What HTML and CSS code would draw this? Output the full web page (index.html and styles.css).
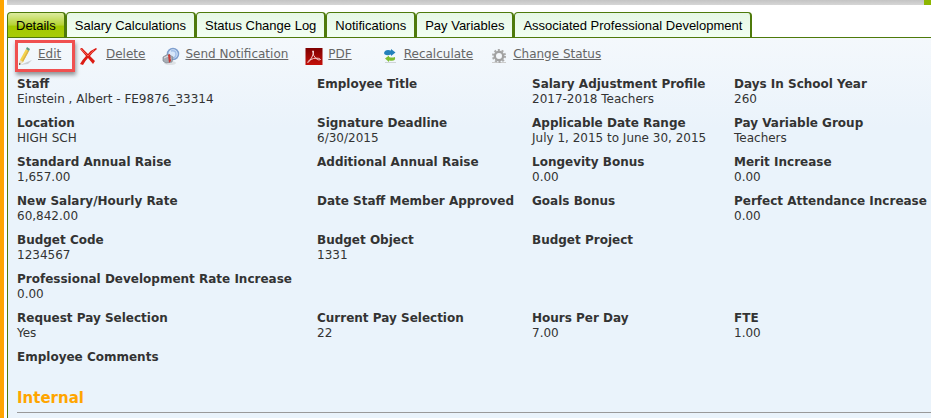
FILE: index.html
```
<!DOCTYPE html>
<html lang="en">
<head>
    <meta charset="UTF-8">
    <meta name="viewport" content="width=device-width, initial-scale=1.0">
    <title>Salary Details</title>
    <link rel="stylesheet" href="styles.css">
</head>
<body>
    <div class="topbar"></div>

    <nav class="tabs">
        <button type="button" class="tab active">Details</button>
        <button type="button" class="tab">Salary Calculations</button>
        <button type="button" class="tab">Status Change Log</button>
        <button type="button" class="tab">Notifications</button>
        <button type="button" class="tab">Pay Variables</button>
        <button type="button" class="tab">Associated Professional Development</button>
    </nav>

    <main class="panel">
        <div class="toolbar">
            <a href="#edit" class="action highlight">
                <svg width="18" height="20" viewBox="0 0 18 20">
                    <path d="M2 19 L14 14 L10 18 Z" fill="#ccd0d3"/>
                    <path d="M2 14 L8 3 L11 5 L5 16 L1 19 Z" fill="#f4d34c"/>
                    <path d="M4 15 L10 4 L11 5 L5 16 Z" fill="#d9b04a"/>
                    <path d="M1 19 L2 14 L5 16 Z" fill="#eadfc8"/>
                    <path d="M1 19 L1 17 L3 18 Z" fill="#444"/>
                    <path d="M8 3 L9 1 L12 3 L11 5 Z" fill="#5f9a82"/>
                </svg>
                <span>Edit</span>
            </a>
            <a href="#delete" class="action delete">
                <svg width="18" height="18" viewBox="0 0 18 18">
                    <path d="M1 2 Q3 0 4 2 L9 7 Q12 3 17 1 L18 2 Q13 6 11 9 L16 14 L14 17 L9 11 Q6 14 4 18 L1 17 Q4 12 7 9 Z" fill="#dc1b13"/>
                    <path d="M2 2 L9 9 L15 3" fill="none" stroke="#f25b4f"/>
                </svg>
                <span>Delete</span>
            </a>
            <a href="#notify" class="action">
                <svg width="18" height="18" viewBox="0 0 18 18">
                    <ellipse cx="8" cy="16" rx="6" ry="2" fill="#dde1e5"/>
                    <circle cx="11" cy="7" r="5.5" fill="#d6e6fa" stroke="#7f9fce" stroke-width="1.5"/>
                    <path d="M9 4 Q14 3 14 7 Q14 11 10 11" fill="none" stroke="#a3c0e8" stroke-width="1.5"/>
                    <path d="M1 10 L6 7 L11 10 L10 15 L4 16 L1 14 Z" fill="#a7adb5" stroke="#7d858f" stroke-width=".7"/>
                    <path d="M2 11 L6 9 L9 12" fill="none" stroke="#e3e6ea"/>
                    <path d="M6 8 L8 7 L9 14 L7 16 Z" fill="#c83a35"/>
                </svg>
                <span>Send Notification</span>
            </a>
            <a href="#pdf" class="action">
                <svg width="17" height="17" viewBox="0 0 17 17">
                    <defs>
                        <linearGradient id="pdf-red" x1="0" y1="0" x2="0" y2="1">
                            <stop offset="0" stop-color="#7e0000"/>
                            <stop offset="1" stop-color="#c4100a"/>
                        </linearGradient>
                    </defs>
                    <rect width="17" height="17" fill="url(#pdf-red)"/>
                    <path d="M7 3 Q8.500 2 8 5 Q7 9 4 13 Q2 15.500 2 14 Q3 12 8 10.500 Q14 9.500 15 11.500 Q14 13 10.500 10.500 Q7.500 8 7 3 Z" fill="none" stroke="#f7dddb" stroke-width=".9"/>
                </svg>
                <span>PDF</span>
            </a>
            <a href="#recalculate" class="action spaced">
                <svg width="14" height="16" viewBox="0 0 14 16">
                    <path d="M2 14 H13 V15 H2 Z" fill="#cfd4d8"/>
                    <path d="M1 5 Q2 1 8 2.500 L8 1 L12.500 4.500 L8 8 L8 6.500 Q5 7.500 3 7 Q1 6.500 1 5 Z" fill="#2380bb"/>
                    <path d="M12 9 Q13 14 6 12.500 L6 14 L2 10.500 L6 7.500 L6 9 Q9 10 12 9 Z" fill="#7fbd31"/>
                </svg>
                <span>Recalculate</span>
            </a>
            <a href="#status" class="action">
                <svg width="16" height="16" viewBox="0 0 16 16">
                    <path d="M1 14 H15 V15 H1 Z" fill="#ccc"/>
                    <circle cx="8" cy="8" r="6" fill="none" stroke="#aaa" stroke-width="2" stroke-dasharray="2 1.770"/>
                    <circle cx="8" cy="8" r="4.200" fill="#f4f7fa" stroke="#a2a2a2" stroke-width="2.400"/>
                </svg>
                <span>Change Status</span>
            </a>
        </div>

        <dl class="details">
            <div><dt>Staff</dt><dd>Einstein , Albert - FE9876_33314</dd></div>
            <div><dt>Employee Title</dt><dd></dd></div>
            <div><dt>Salary Adjustment Profile</dt><dd>2017-2018 Teachers</dd></div>
            <div><dt>Days In School Year</dt><dd>260</dd></div>

            <div><dt>Location</dt><dd>HIGH SCH</dd></div>
            <div><dt>Signature Deadline</dt><dd>6/30/2015</dd></div>
            <div><dt>Applicable Date Range</dt><dd>July 1, 2015 to June 30, 2015</dd></div>
            <div><dt>Pay Variable Group</dt><dd>Teachers</dd></div>

            <div><dt>Standard Annual Raise</dt><dd>1,657.00</dd></div>
            <div><dt>Additional Annual Raise</dt><dd></dd></div>
            <div><dt>Longevity Bonus</dt><dd>0.00</dd></div>
            <div><dt>Merit Increase</dt><dd>0.00</dd></div>

            <div><dt>New Salary/Hourly Rate</dt><dd>60,842.00</dd></div>
            <div><dt>Date Staff Member Approved</dt><dd></dd></div>
            <div><dt>Goals Bonus</dt><dd></dd></div>
            <div><dt>Perfect Attendance Increase</dt><dd>0.00</dd></div>

            <div><dt>Budget Code</dt><dd>1234567</dd></div>
            <div><dt>Budget Object</dt><dd>1331</dd></div>
            <div class="last"><dt>Budget Project</dt><dd></dd></div>

            <div class="full"><dt>Professional Development Rate Increase</dt><dd>0.00</dd></div>

            <div><dt>Request Pay Selection</dt><dd>Yes</dd></div>
            <div><dt>Current Pay Selection</dt><dd>22</dd></div>
            <div><dt>Hours Per Day</dt><dd>7.00</dd></div>
            <div><dt>FTE</dt><dd>1.00</dd></div>

            <div class="full"><dt>Employee Comments</dt><dd></dd></div>
        </dl>

        <h2>Internal</h2>
    </main>
</body>
</html>
```
FILE: styles.css
```
* {
    box-sizing: border-box;
}

body {
    margin: 0;
    min-height: 100vh;
    padding-left: 3px;
    border-left: 4px solid #ffa500;
    background-color: #fff;
    color: #333;
    font-family: Verdana, "DejaVu Sans", sans-serif;
    font-size: 12px;
    line-height: 15px;
    display: flex;
    flex-direction: column;
}

.topbar {
    height: 5px;
    background: linear-gradient(#c4c4c4, #d6d6d6);
    border-right: 7px solid #8db600;
}

.tabs {
    display: flex;
    padding-top: 7px;
}

.tab {
    height: 25px;
    padding: 0 8px;
    border: 1px solid #4e7a0b;
    border-right-width: 2px;
    border-bottom: 0;
    border-radius: 4px 4px 0 0;
    background: linear-gradient(#e6f7e6, #f2fff2);
    color: #000;
    font-family: Arial, "Liberation Sans", sans-serif;
    font-size: 13px;
    white-space: nowrap;
    cursor: pointer;
}

.tab.active {
    background: linear-gradient(#dceb9f, #b5d334 50%, #a2c800 55%, #a8cc08);
}

.panel {
    flex: 1;
    padding: 2px 0 4px 9px;
    border-top: 1px solid #4e7a0b;
    border-left: 1px solid #4e7a0b;
    background: linear-gradient(#f4f8fc, #eaf3fb 90px);
}

.toolbar {
    display: flex;
    height: 37px;
}

.action {
    display: flex;
    align-items: center;
    gap: 4px;
    height: 32px;
    margin-right: 16px;
    color: #666;
    white-space: nowrap;
}

.action svg {
    width: 20px;
}

.action span {
    padding-bottom: 4px;
}

.delete {
    gap: 8px;
}

.spaced {
    margin-left: 12px;
}

.highlight {
    gap: 2px;
    width: 60px;
    margin-left: -2px;
    margin-right: 3px;
    border: 3px solid #f05050;
    box-shadow: 1px 3px 4px rgba(0, 0, 0, 0.4);
}

.highlight svg {
    width: 18px;
}

.details {
    display: grid;
    grid-template-columns: 300fr 215fr 202fr 197fr;
    row-gap: 9px;
    margin: 0;
    white-space: nowrap;
}

.details dt {
    font-weight: bold;
}

.details dd {
    margin: 0;
    min-height: 15px;
}

.details .last {
    grid-column: 3 / 5;
}

.details .full {
    grid-column: 1 / 5;
}

h2 {
    margin: 9px 0 0;
    padding-bottom: 5px;
    border-bottom: 1px solid #999;
    color: #ffa500;
    font-size: 15px;
    line-height: 18px;
}
```
